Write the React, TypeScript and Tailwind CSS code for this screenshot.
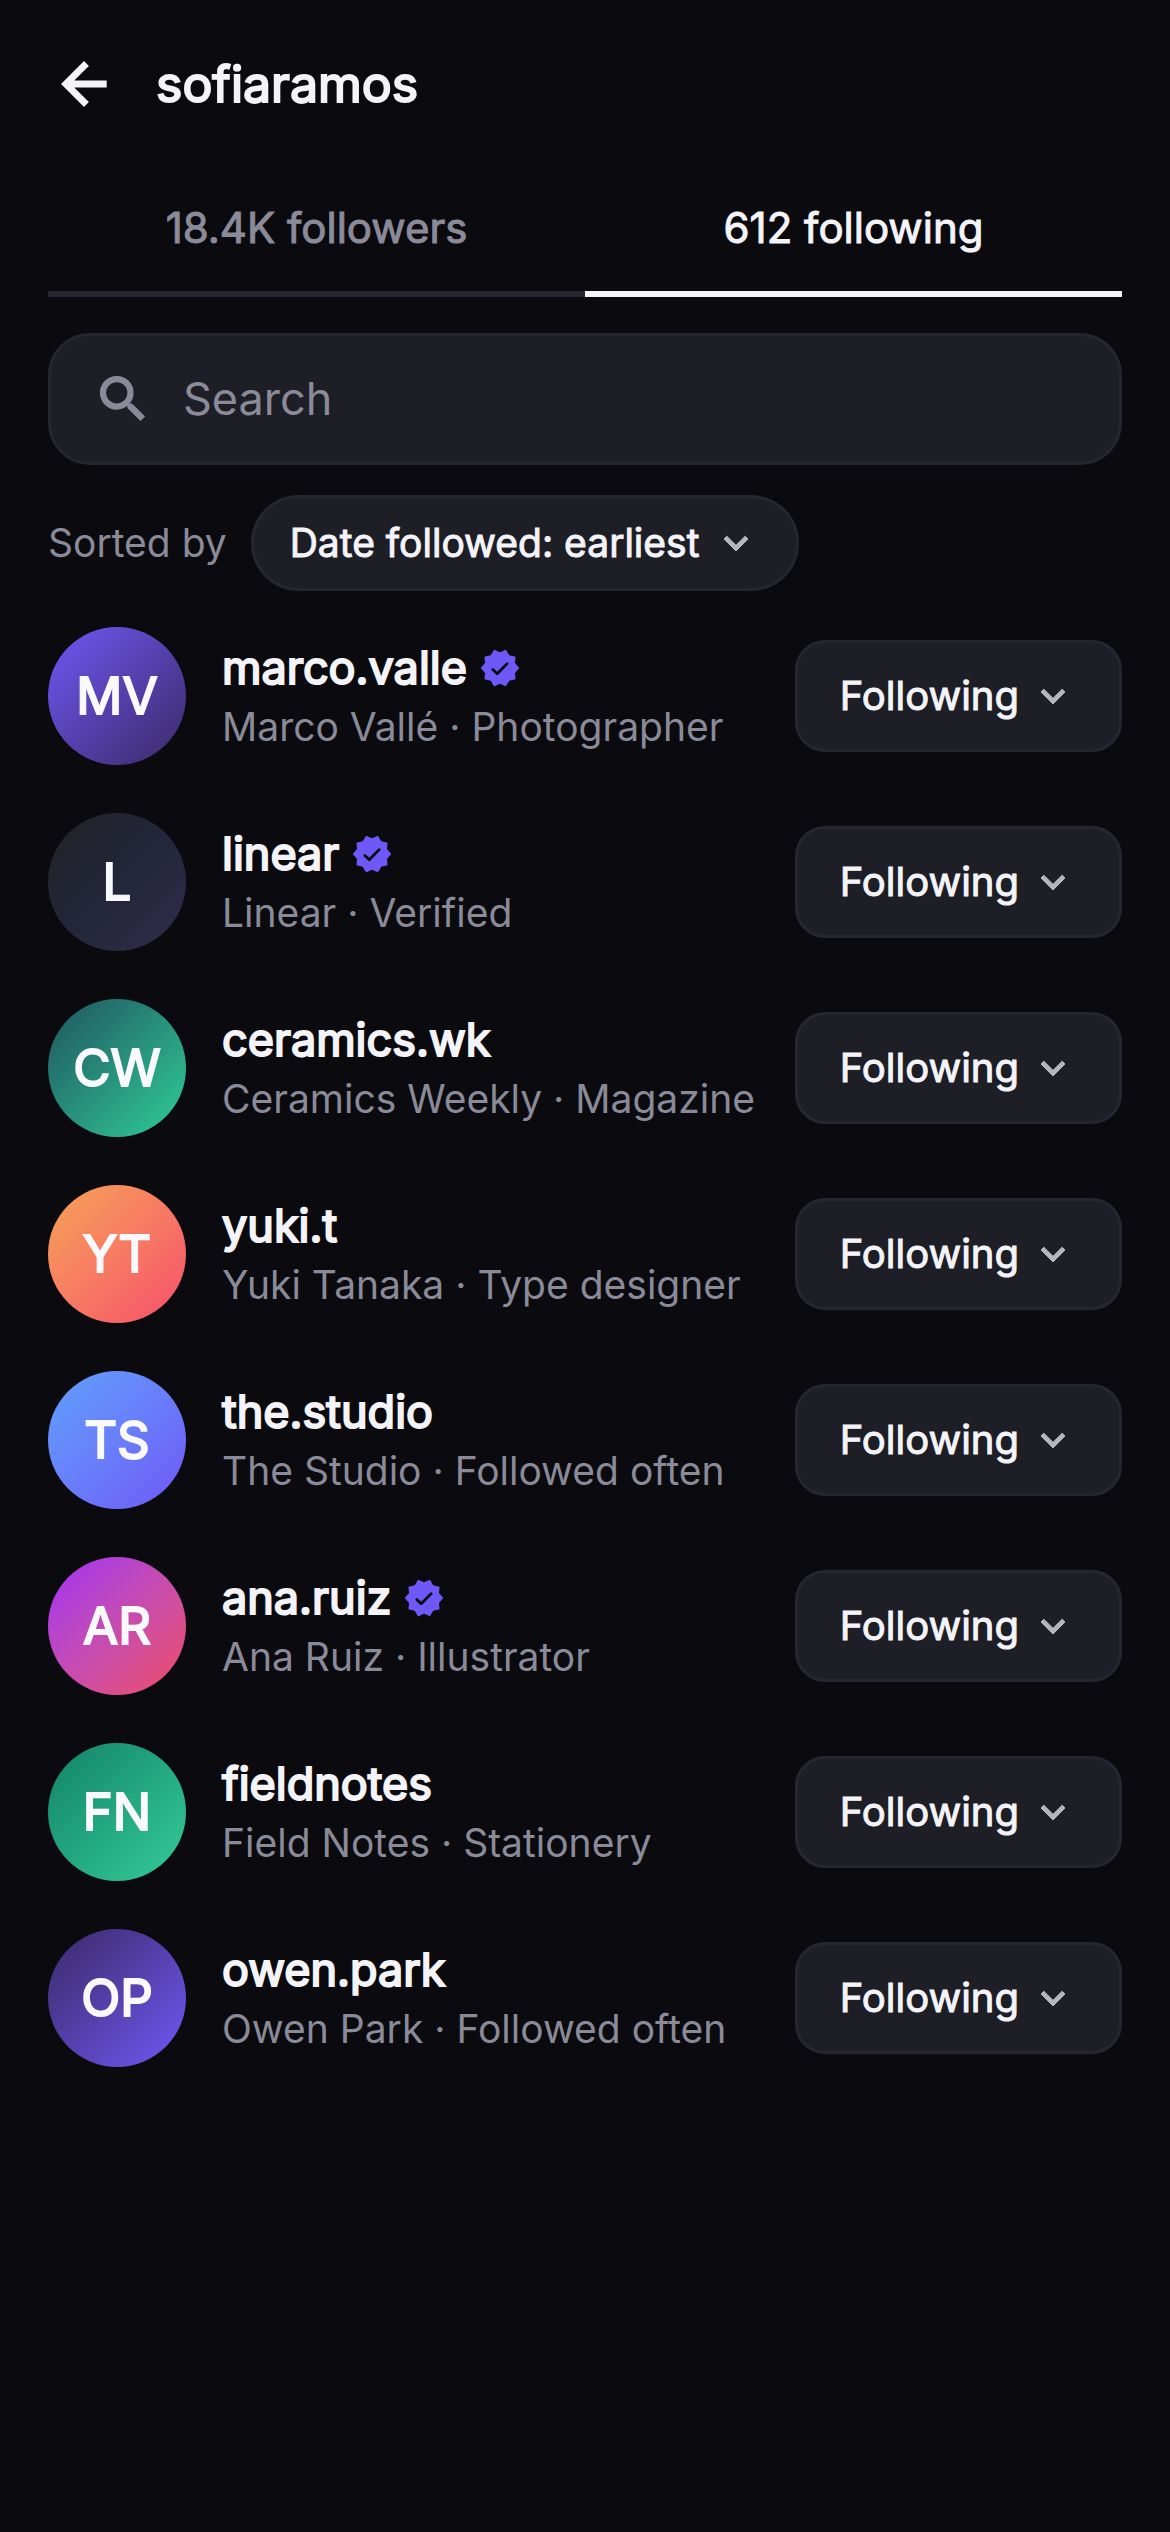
import React, { useState } from 'react';

interface Account {
  handle: string;
  detail: string;
  initials: string;
  gradient: string;
  verified?: boolean;
}

interface IconProps {
  className?: string;
}

const accounts: Account[] = [
  { handle: 'marco.valle', detail: 'Marco Vallé · Photographer', initials: 'MV', gradient: 'from-[#7058f8] to-[#3b2a68]', verified: true },
  { handle: 'linear', detail: 'Linear · Verified', initials: 'L', gradient: 'from-[#222224] via-[#23263a] to-[#332c4c]', verified: true },
  { handle: 'ceramics.wk', detail: 'Ceramics Weekly · Magazine', initials: 'CW', gradient: 'from-[#1f5560] to-[#2fcf95]' },
  { handle: 'yuki.t', detail: 'Yuki Tanaka · Type designer', initials: 'YT', gradient: 'from-[#f5a157] to-[#f64c6a]' },
  { handle: 'the.studio', detail: 'The Studio · Followed often', initials: 'TS', gradient: 'from-[#5fa0fb] to-[#6e56f8]' },
  { handle: 'ana.ruiz', detail: 'Ana Ruiz · Illustrator', initials: 'AR', gradient: 'from-[#a329f5] to-[#f04a60]', verified: true },
  { handle: 'fieldnotes', detail: 'Field Notes · Stationery', initials: 'FN', gradient: 'from-[#128468] to-[#34cc98]' },
  { handle: 'owen.park', detail: 'Owen Park · Followed often', initials: 'OP', gradient: 'from-[#3b2a68] to-[#7058f8]' },
];

const tabs = [
  { id: 'followers', label: '18.4K followers' },
  { id: 'following', label: '612 following' },
];

const BackIcon: React.FC<IconProps> = ({ className }) => (
  <svg className={className} viewBox="0 0 24 24" fill="currentColor" stroke="currentColor" strokeWidth={0.5} aria-hidden="true">
    <path d="M20 11H7.83l5.59-5.59L12 4l-8 8 8 8 1.41-1.41L7.83 13H20v-2z" />
  </svg>
);

const SearchIcon: React.FC<IconProps> = ({ className }) => (
  <svg className={className} viewBox="0 0 24 24" fill="currentColor" stroke="currentColor" strokeWidth={0.5} aria-hidden="true">
    <path d="M15.5 14h-.79l-.28-.27A6.471 6.471 0 0016 9.5 6.5 6.5 0 109.5 16c1.61 0 3.09-.59 4.23-1.57l.27.28v.79l5 4.99L20.49 19l-4.99-5zm-6 0C7.01 14 5 11.99 5 9.5S7.01 5 9.5 5 14 7.01 14 9.5 11.99 14 9.5 14z" />
  </svg>
);

const ChevronIcon: React.FC<IconProps> = ({ className }) => (
  <svg className={className} viewBox="0 0 24 24" fill="currentColor" stroke="currentColor" strokeWidth={0.5} aria-hidden="true">
    <path d="M16.59 8.59L12 13.17 7.41 8.59 6 10l6 6 6-6z" />
  </svg>
);

const VerifiedBadge: React.FC = () => (
  <svg className="size-[42px] shrink-0" viewBox="0 0 24 24" role="img" aria-label="Verified">
    <path
      className="fill-[#7058f8]"
      d="M23 12l-2.44-2.79.34-3.69-3.61-.82-1.89-3.2L12 2.96 8.6 1.5 6.71 4.69 3.1 5.5l.34 3.7L1 12l2.44 2.79-.34 3.7 3.61.82L8.6 22.5l3.4-1.47 3.4 1.46 1.89-3.19 3.61-.82-.34-3.69L23 12z"
    />
    <path
      className="stroke-[#0a0a0f]"
      d="M7.9 12.8l2.5 2.5 5.7-5.8"
      fill="none"
      strokeWidth={1.6}
      strokeLinecap="round"
      strokeLinejoin="round"
    />
  </svg>
);

const AccountRow: React.FC<{ account: Account }> = ({ account }) => (
  <li className="flex items-center gap-9 py-6">
    <div className={`flex size-[138px] shrink-0 items-center justify-center rounded-full bg-linear-135 text-[51px] text-[#f9f9fc] [-webkit-text-stroke:2px] ${account.gradient}`}>
      {account.initials}
    </div>
    <div className="flex min-w-0 flex-1 flex-col gap-0.5">
      <div className="flex items-center gap-3">
        <span className="text-[45px] leading-[60px] [-webkit-text-stroke:2px]">{account.handle}</span>
        {account.verified && <VerifiedBadge />}
      </div>
      <span className="truncate text-[39px] leading-[54px] text-[#8b8a99]">{account.detail}</span>
    </div>
    <button
      type="button"
      aria-haspopup="menu"
      className="flex h-28 shrink-0 items-center gap-2.5 rounded-[30px] border-3 border-[#262630] bg-[#1e1e26] px-[42px] text-[40px] [-webkit-text-stroke:1px]"
    >
      Following
      <ChevronIcon className="size-12 text-[#b6b6c0]" />
    </button>
  </li>
);

export default function App() {
  const [activeTab, setActiveTab] = useState('following');

  return (
    <div className="min-h-screen bg-[#0a0a0f] px-12 font-[Inter,sans-serif] text-[#f4f4f8] [font-optical-sizing:none]">
      <header className="flex h-[168px] items-center gap-9">
        <button type="button" aria-label="Back" className="flex size-[72px] items-center justify-center">
          <BackIcon className="size-[66px]" />
        </button>
        <h1 className="text-[50px] [font-optical-sizing:auto] [-webkit-text-stroke:2px]">sofiaramos</h1>
      </header>

      <div role="tablist" className="flex">
        {tabs.map((tab) => (
          <button
            key={tab.id}
            type="button"
            role="tab"
            aria-selected={activeTab === tab.id}
            onClick={() => setActiveTab(tab.id)}
            className={`h-[129px] flex-1 border-b-6 pb-7 pt-6 text-[42px] [-webkit-text-stroke:1px] ${
              activeTab === tab.id ? 'border-[#f4f4f8]' : 'border-[#262630] text-[#8b8a99]'
            }`}
          >
            {tab.label}
          </button>
        ))}
      </div>

      <label className="mt-9 flex h-[132px] items-center gap-[30px] rounded-[42px] border-3 border-[#262630] bg-[#1e1e26] px-[42px] text-[#8b8a99]">
        <SearchIcon className="size-[60px] shrink-0" />
        <input
          type="search"
          placeholder="Search"
          aria-label="Search"
          className="min-w-0 flex-1 bg-transparent text-[45px] text-[#f4f4f8] outline-none placeholder:text-[#8b8a99]"
        />
      </label>

      <div className="mt-[30px] mb-3 flex items-center gap-6">
        <label htmlFor="sort" className="text-[39px] text-[#8b8a99]">
          Sorted by
        </label>
        <div className="relative flex items-center">
          <select
            id="sort"
            className="h-24 appearance-none rounded-full border-3 border-[#262630] bg-[#1e1e26] pl-9 pr-24 text-[39px] [-webkit-text-stroke:1px]"
          >
            <option>Date followed: earliest</option>
          </select>
          <ChevronIcon className="pointer-events-none absolute right-[39px] size-12 text-[#b6b6c0]" />
        </div>
      </div>

      <ul>
        {accounts.map((account) => (
          <AccountRow key={account.handle} account={account} />
        ))}
      </ul>
    </div>
  );
}
